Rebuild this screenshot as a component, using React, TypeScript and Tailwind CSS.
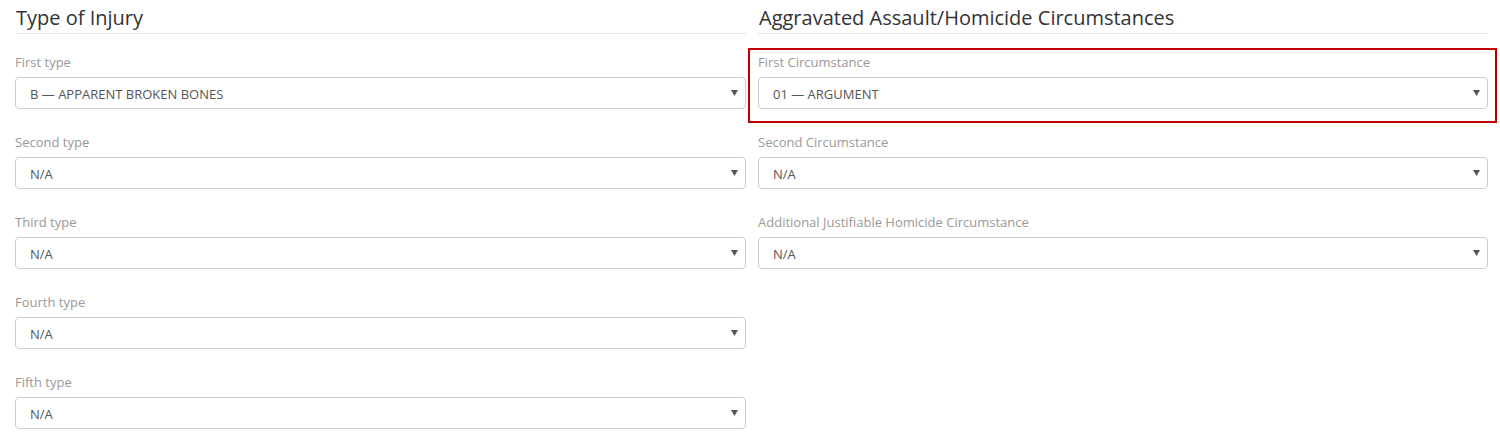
import React from "react";

const font = { fontFamily: '"Open Sans", "Noto Sans", sans-serif' };

function Arrow() {
  return (
    <svg width="7" height="6" viewBox="0 0 7 6" className="shrink-0">
      <path d="M0 0 L7 0 L3.5 6 Z" fill="#555" />
    </svg>
  );
}

function Field({ label, value }: { label: string; value: string }) {
  return (
    <div>
      <div className="text-[13px] leading-[18px] text-[#999] mb-[6px]">{label}</div>
      <div className="h-[32px] border border-[#ccc] rounded-[4px] bg-white flex items-center justify-between pl-[14px] pr-[7px]">
        <span className="text-[13px] text-[#555] pt-[3px]">{value}</span>
        <Arrow />
      </div>
    </div>
  );
}

function Heading({ children }: { children: React.ReactNode }) {
  return (
    <div className="border-b border-[#e5e5e5] pt-[6px] pb-[3px] mb-[19px]">
      <h2 className="text-[20px] leading-[24px] text-[#333] pl-[1px]">{children}</h2>
    </div>
  );
}

export default function App() {
  return (
    <div style={font} className="w-[1500px] h-[433px] bg-white overflow-hidden pl-[15px] pr-[12px] grid grid-cols-[731px_730px] gap-x-[12px]">
      <div className="flex flex-col gap-[24px]">
        <div>
          <Heading>Type of Injury</Heading>
          <Field label="First type" value="B — APPARENT BROKEN BONES" />
        </div>
        <Field label="Second type" value="N/A" />
        <Field label="Third type" value="N/A" />
        <Field label="Fourth type" value="N/A" />
        <Field label="Fifth type" value="N/A" />
      </div>
      <div className="flex flex-col gap-[24px]">
        <div>
          <Heading>Aggravated Assault/Homicide Circumstances</Heading>
          <div className="relative">
            <div className="absolute -left-[10px] -right-[9px] -top-[5px] -bottom-[14px] border-2 border-[#c00000] pointer-events-none" />
            <Field label="First Circumstance" value="01 — ARGUMENT" />
          </div>
        </div>
        <Field label="Second Circumstance" value="N/A" />
        <Field label="Additional Justifiable Homicide Circumstance" value="N/A" />
      </div>
    </div>
  );
}
